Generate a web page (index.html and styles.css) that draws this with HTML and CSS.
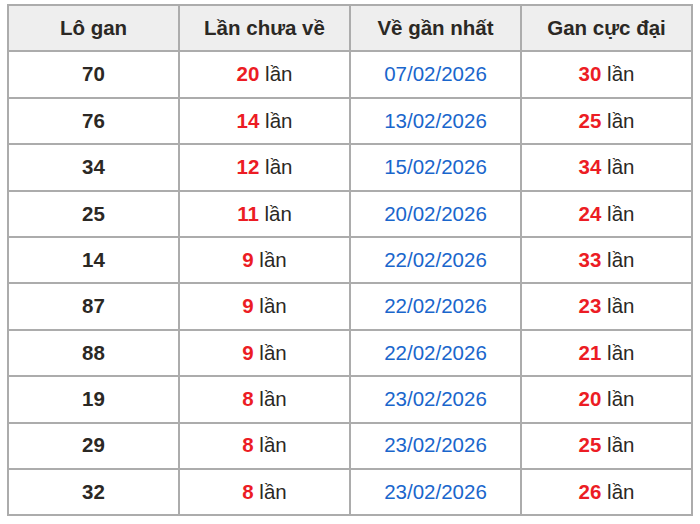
FILE: index.html
```html
<!DOCTYPE html>
<html lang="vi">
<head>
<meta charset="utf-8">
<link rel="stylesheet" href="styles.css">
</head>
<body>
<div class="wrap">
<table class="gan">
<thead>
<tr><th>Lô gan</th><th>Lần chưa về</th><th>Về gần nhất</th><th>Gan cực đại</th></tr>
</thead>
<tbody>
<tr><td class="num">70</td><td><b class="red">20</b> lần</td><td class="date">07/02/2026</td><td><b class="red">30</b> lần</td></tr>
<tr><td class="num">76</td><td><b class="red">14</b> lần</td><td class="date">13/02/2026</td><td><b class="red">25</b> lần</td></tr>
<tr><td class="num">34</td><td><b class="red">12</b> lần</td><td class="date">15/02/2026</td><td><b class="red">34</b> lần</td></tr>
<tr><td class="num">25</td><td><b class="red">11</b> lần</td><td class="date">20/02/2026</td><td><b class="red">24</b> lần</td></tr>
<tr><td class="num">14</td><td><b class="red">9</b> lần</td><td class="date">22/02/2026</td><td><b class="red">33</b> lần</td></tr>
<tr><td class="num">87</td><td><b class="red">9</b> lần</td><td class="date">22/02/2026</td><td><b class="red">23</b> lần</td></tr>
<tr><td class="num">88</td><td><b class="red">9</b> lần</td><td class="date">22/02/2026</td><td><b class="red">21</b> lần</td></tr>
<tr><td class="num">19</td><td><b class="red">8</b> lần</td><td class="date">23/02/2026</td><td><b class="red">20</b> lần</td></tr>
<tr><td class="num">29</td><td><b class="red">8</b> lần</td><td class="date">23/02/2026</td><td><b class="red">25</b> lần</td></tr>
<tr><td class="num">32</td><td><b class="red">8</b> lần</td><td class="date">23/02/2026</td><td><b class="red">26</b> lần</td></tr>
</tbody>
</table>
</div>
</body>
</html>
```
FILE: styles.css
```css
html, body {
  margin: 0;
  padding: 0;
  background: #ffffff;
}
.wrap {
  padding: 4px 7px;
}
.gan {
  width: 686px;
  border-collapse: collapse;
  table-layout: fixed;
  font-family: "Liberation Sans", Arial, sans-serif;
  font-size: 20.5px;
  color: #2b2824;
}
.gan th, .gan td {
  border: 2px solid #acacac;
  text-align: center;
  vertical-align: middle;
  height: 44.4px;
  padding: 0;
  line-height: 1;
}
.gan th {
  background: #eeeeee;
  font-weight: bold;
}
.gan .num {
  font-weight: bold;
}
.gan .red {
  color: #ec1c24;
  font-weight: bold;
}
.gan .date {
  color: #1a66cc;
}
```
